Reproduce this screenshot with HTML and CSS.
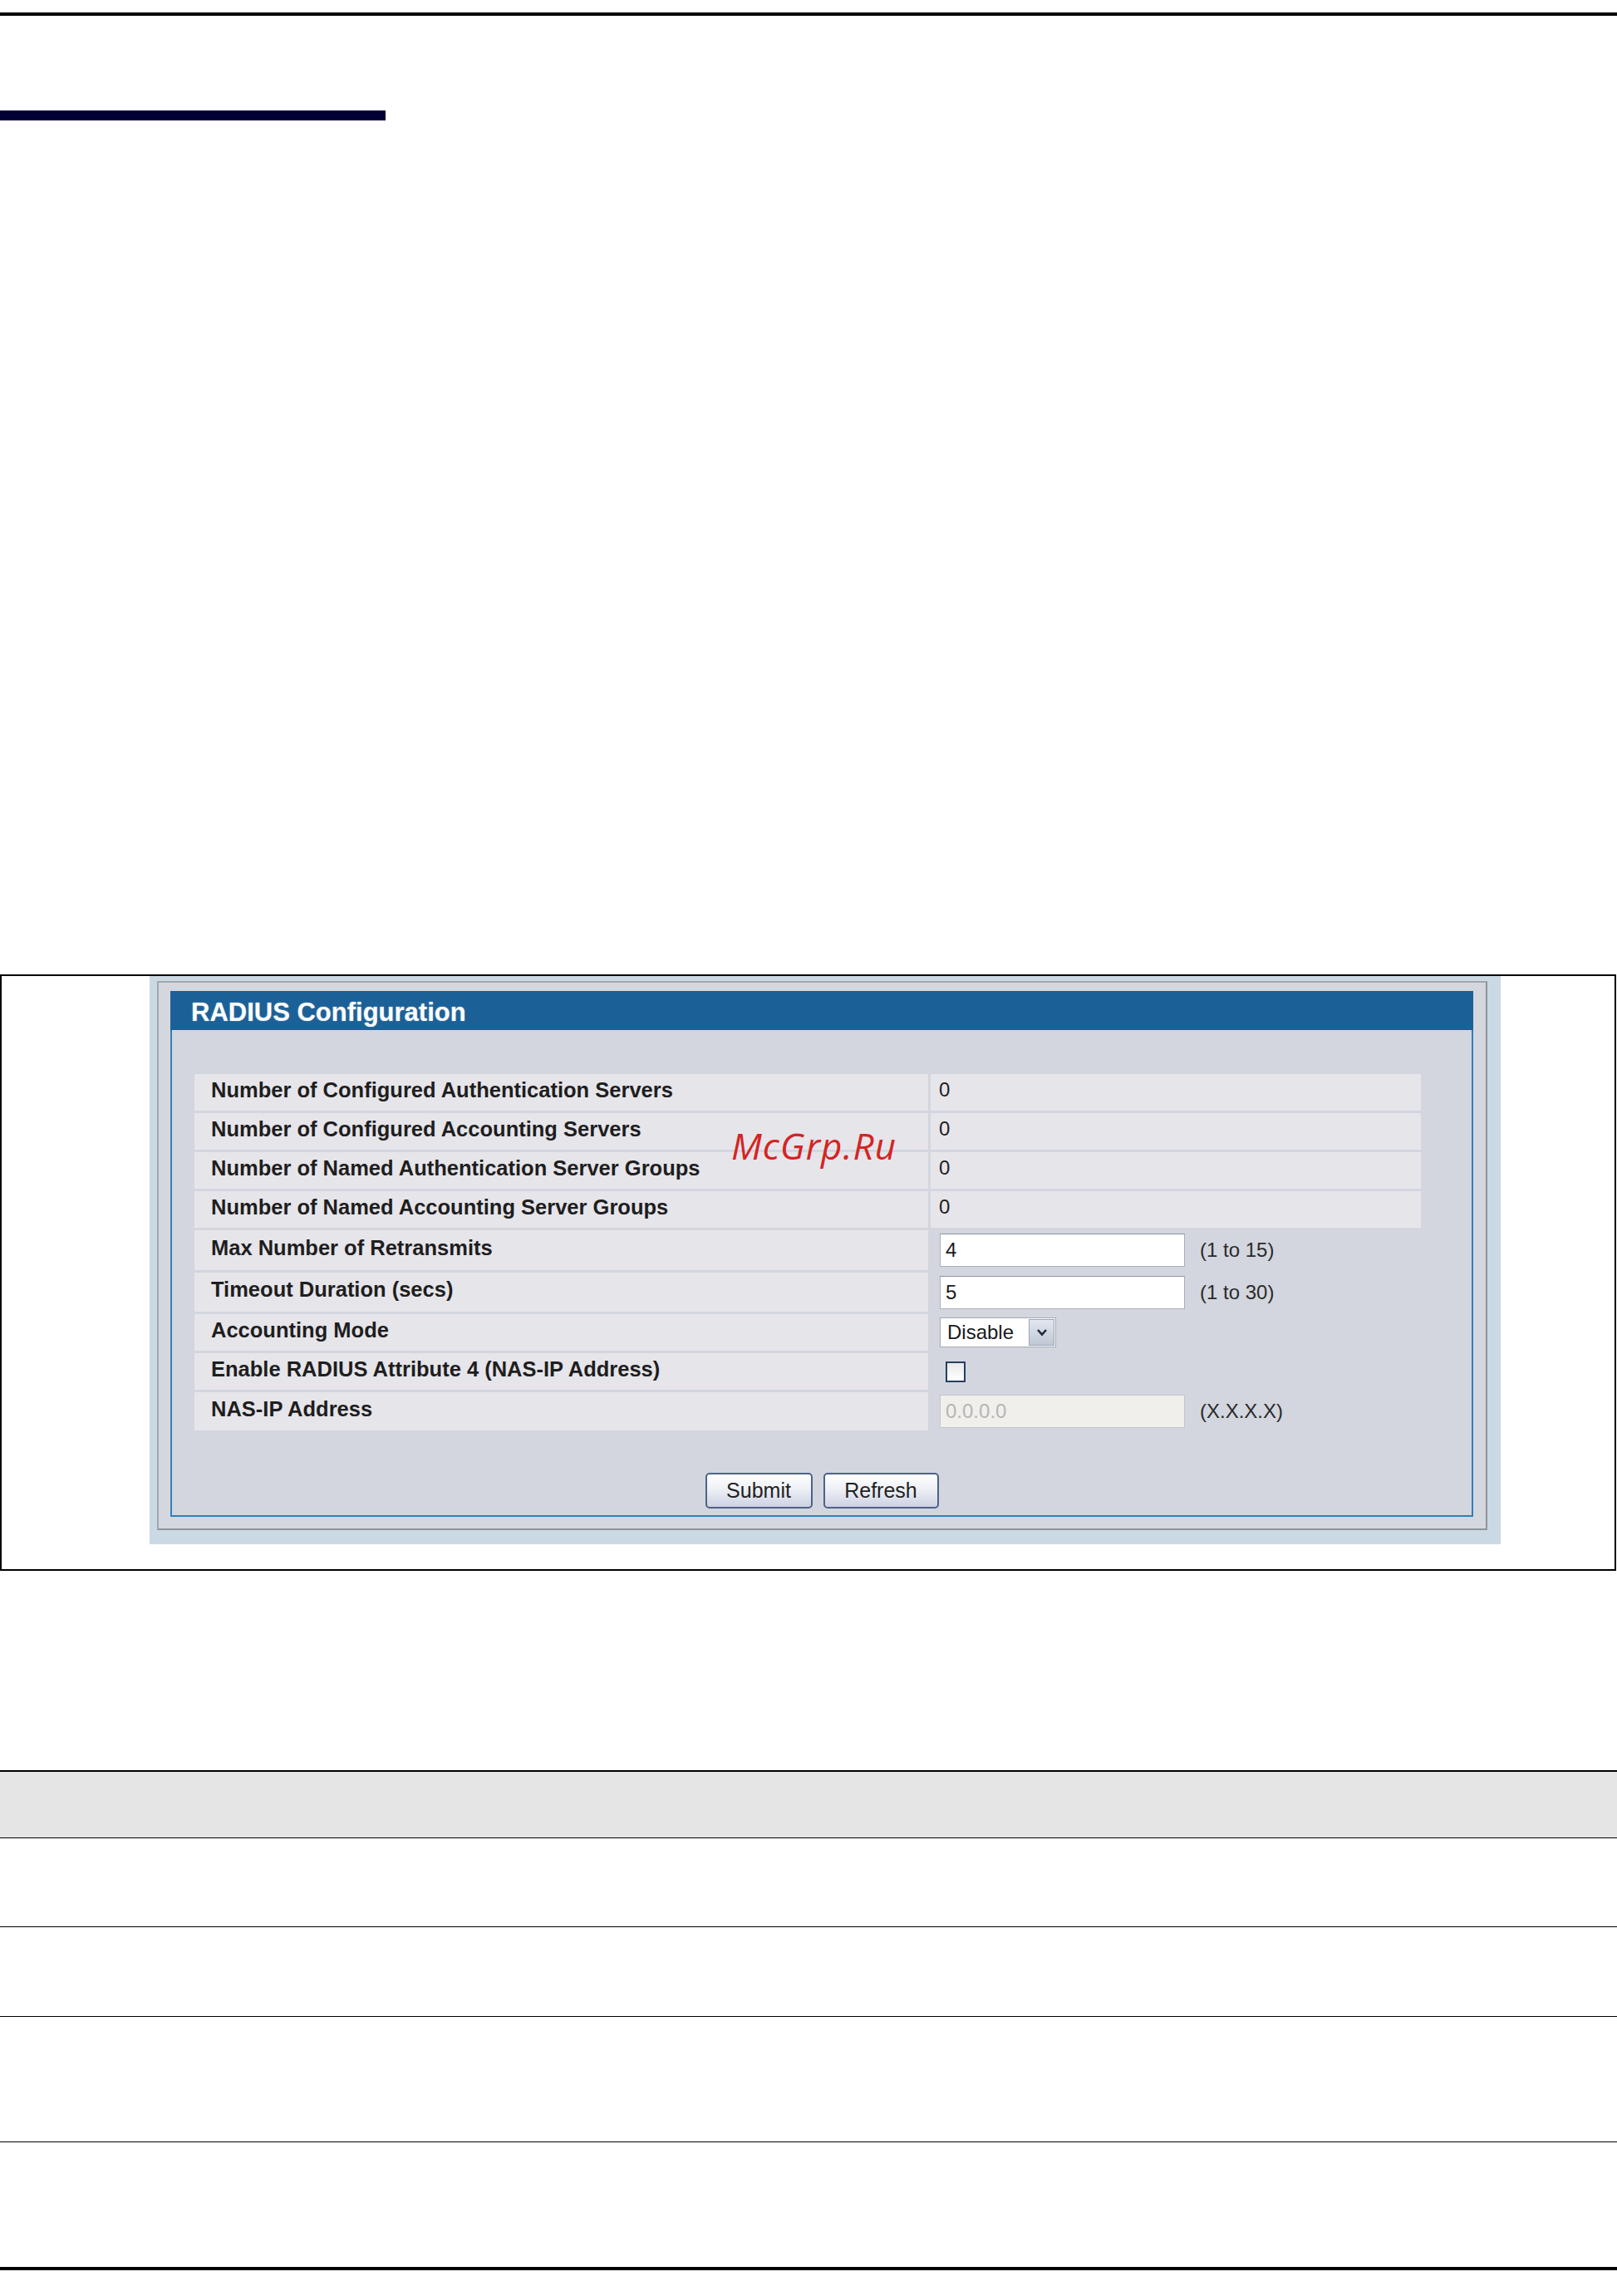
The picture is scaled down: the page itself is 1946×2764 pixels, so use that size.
FILE: index.html
```html
<!DOCTYPE html>
<html lang="en">
<head>
<meta charset="utf-8">
<title>RADIUS Configuration</title>
<link rel="stylesheet" href="styles.css">
</head>
<body>
<div class="top-rule"></div>
<div class="title-bar"></div>

<div class="figure">
  <div class="shot">
    <div class="frame">
      <div class="panel">
        <div class="panel-head">RADIUS Configuration</div>
        <div class="panel-body">
          <div class="cfg">
            <div class="lbl">Number of Configured Authentication Servers</div>
            <div class="val val-text shaded">0</div>
            <div class="lbl">Number of Configured Accounting Servers</div>
            <div class="val val-text shaded">0</div>
            <div class="lbl">Number of Named Authentication Server Groups</div>
            <div class="val val-text shaded">0</div>
            <div class="lbl">Number of Named Accounting Server Groups</div>
            <div class="val val-text shaded">0</div>

            <div class="lbl">Max Number of Retransmits</div>
            <div class="val"><input class="field" type="text" value="4"><span class="hint">(1 to 15)</span></div>
            <div class="lbl">Timeout Duration (secs)</div>
            <div class="val"><input class="field" type="text" value="5"><span class="hint">(1 to 30)</span></div>
            <div class="lbl">Accounting Mode</div>
            <div class="val">
              <div class="select">
                <span class="select-text">Disable</span>
                <span class="select-btn">
                  <svg width="14" height="10" viewBox="0 0 14 10"><path d="M2 2 L7 7.5 L12 2" fill="none" stroke="#1f2a3a" stroke-width="2.6"/></svg>
                </span>
              </div>
            </div>
            <div class="lbl">Enable RADIUS Attribute 4 (NAS-IP Address)</div>
            <div class="val"><span class="check"></span></div>
            <div class="lbl">NAS-IP Address</div>
            <div class="val"><input class="field field-disabled" type="text" value="0.0.0.0" disabled><span class="hint">(X.X.X.X)</span></div>
          </div>
          <div class="buttons">
            <button class="btn btn-submit" type="button">Submit</button>
            <button class="btn btn-refresh" type="button">Refresh</button>
          </div>
        </div>
      </div>
    </div>
  </div>
  <span class="watermark">McGrp.Ru</span>
</div>

<div class="desc">
  <div class="desc-head"></div>
  <div class="desc-row r1"></div>
  <div class="desc-row r2"></div>
  <div class="desc-row r3"></div>
  <div class="desc-row r4"></div>
</div>
<div class="bottom-rule"></div>
</body>
</html>
```
FILE: styles.css
```css
* { box-sizing: border-box; }
html, body { margin: 0; padding: 0; background: #ffffff; }
body {
  width: 1946px;
  font-family: "Liberation Sans", Arial, sans-serif;
  color: #1d1d1d;
}

.top-rule { margin-top: 15px; height: 4px; background: #000; }
.title-bar { margin-top: 114px; width: 464px; height: 12px; background: #000033; }

/* figure box */
.figure {
  position: relative;
  margin-top: 1028px;
  width: 1945px;
  height: 718px;
  border: 2px solid #000;
  padding-left: 178px;
}
.shot {
  width: 1626px;
  height: 684px;
  background: #cbd9e4;
  padding: 6px 16px 17px 9px;
}
.frame {
  height: 100%;
  border: 2px solid #a2a7ad;
  border-right-color: #8e9399;
  border-bottom-color: #8e9399;
  background: #d4d7de;
  padding: 10px 15px 14px 14px;
}
.panel { width: 1568px; }
.panel-head {
  height: 47px;
  background: #1b6096;
  color: #ffffff;
  font-weight: bold;
  font-size: 31px;
  line-height: 42px;
  padding: 5px 0 0 25px;
  text-shadow: 0 0 2px rgba(200, 220, 240, 0.5);
}
.panel-body {
  height: 586px;
  background: #d3d6de;
  border: 2px solid #2f7fba;
  border-top: none;
  padding-top: 53px;
}

/* config grid */
.cfg {
  margin-left: 27px;
  width: 1476px;
  display: grid;
  grid-template-columns: 883px 590px;
  grid-template-rows: 44px 44px 44px 44px 48px 47px 44px 44px 46px;
  column-gap: 3px;
  row-gap: 3px;
}
.lbl {
  background: #e6e5ea;
  display: flex;
  align-items: center;
  padding: 0 0 6px 20px;
  font-weight: bold;
  font-size: 25.5px;
  color: #1e1e1e;
  white-space: nowrap;
}
.val {
  display: flex;
  align-items: center;
  padding-left: 11px;
  font-size: 24px;
  color: #1e1e1e;
}
.val-text { padding-bottom: 6px; padding-left: 10px; }
.shaded { background: #e6e5ea; }

.field {
  width: 295px;
  height: 40px;
  border: 1px solid #a9b0b8;
  border-top-color: #8c949c;
  background: #ffffff;
  font-family: "Liberation Sans", Arial, sans-serif;
  font-size: 24px;
  color: #1a1a1a;
  padding: 0 0 0 6px;
  margin: 0;
  outline: none;
}
.field-disabled {
  background: #f0efeb;
  color: #b5b5b5;
  border-color: #c3c5c8;
}
.hint {
  margin-left: 18px;
  font-size: 24px;
  color: #2a2a2a;
}

.select {
  width: 140px;
  height: 36px;
  border: 1px solid #a3aab2;
  background: #ffffff;
  display: flex;
  align-items: stretch;
}
.select-text {
  flex: 1;
  display: flex;
  align-items: center;
  padding-left: 8px;
  font-size: 24px;
  color: #1a1a1a;
}
.select-btn {
  width: 31px;
  margin: 1px;
  border: 1px solid #9aa4b3;
  background: linear-gradient(#e2e7ef, #bfc8d6);
  display: flex;
  align-items: center;
  justify-content: center;
}
.check {
  display: block;
  width: 24px;
  height: 25px;
  margin-left: 7px;
  border: 2px solid #24405f;
  background: linear-gradient(#e9e9e9, #ffffff);
}

.buttons {
  margin-top: 51px;
  display: flex;
  justify-content: center;
  gap: 13px;
}
.btn {
  height: 43px;
  border: 2px solid #4c6389;
  border-radius: 5px;
  background: linear-gradient(#ffffff 0%, #eef0f6 45%, #cdd2e3 100%);
  font-family: "Liberation Sans", Arial, sans-serif;
  font-size: 25px;
  color: #222;
  padding: 0;
}
.btn-submit { width: 129px; }
.btn-refresh { width: 139px; }

.watermark {
  position: absolute;
  left: 878px;
  top: 182px;
  font-family: "Open Sans", "DejaVu Sans", sans-serif;
  font-style: italic;
  font-size: 44px;
  line-height: 1;
  color: #d42424;
  letter-spacing: 1px;
}

/* description table */
.desc { margin-top: 240px; }
.desc-head {
  height: 82px;
  border-top: 2px solid #000;
  border-bottom: 1px solid #000;
  background: #e5e5e5;
}
.desc-row { border-bottom: 1px solid #000; }
.r1 { height: 107px; }
.r2 { height: 108px; }
.r3 { height: 151px; }
.r4 { height: 150px; border-bottom: none; }
.bottom-rule { height: 4px; background: #000; }
```
